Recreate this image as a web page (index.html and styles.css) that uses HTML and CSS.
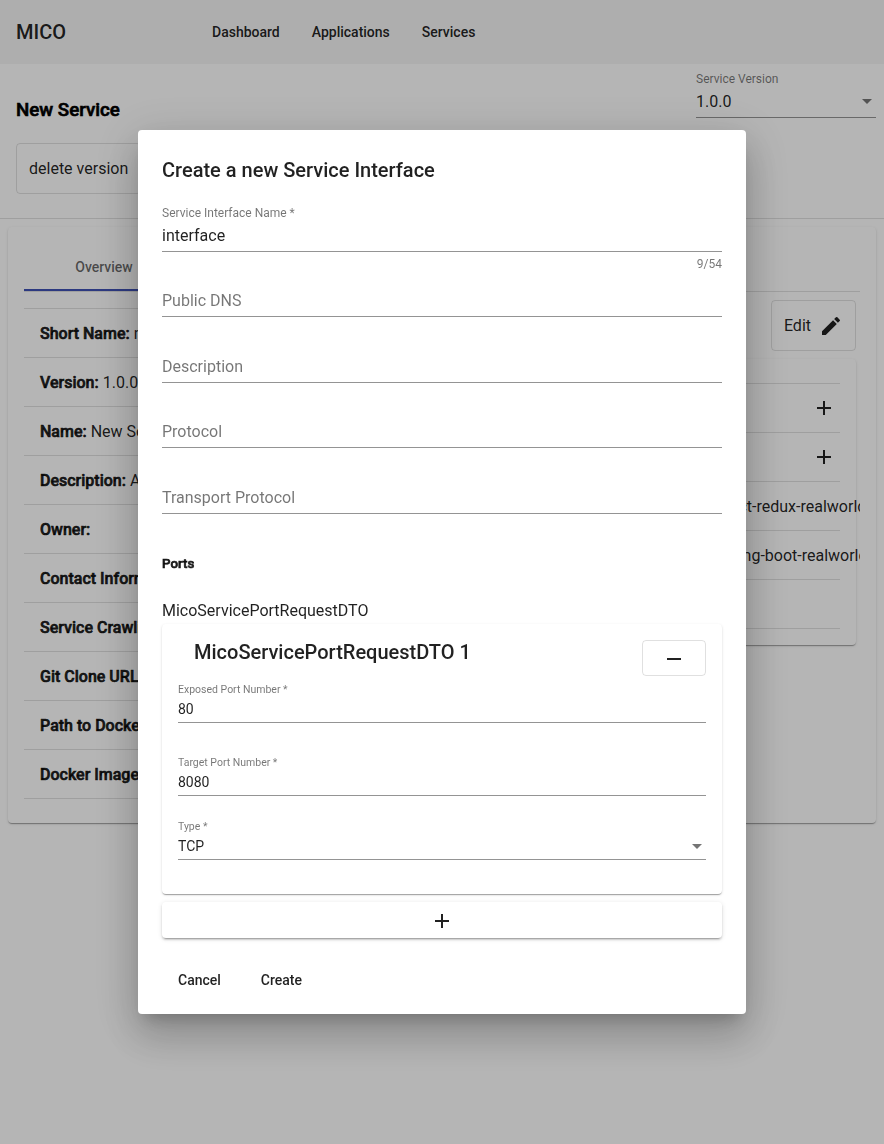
FILE: index.html
```html
<!DOCTYPE html>
<html lang="en">
<head>
<meta charset="utf-8">
<title>MICO</title>
<link rel="stylesheet" href="styles.css">
</head>
<body>
<nav class="toolbar">
  <span class="brand">MICO</span>
  <a>Dashboard</a><a>Applications</a><a>Services</a>
</nav>
<header class="page-head">
  <div class="head-left">
    <h3 class="strong">New Service</h3>
    <button class="outlined">delete version</button>
  </div>
  <div class="field version">
    <span class="label">Service Version</span>
    <span class="value">1.0.0<i class="arrow"></i></span>
  </div>
</header>
<main class="card main-card">
  <div class="tabs"><span class="tab">Overview</span></div>
  <div class="columns">
    <ul class="list info">
      <li><b>Short Name:</b>&nbsp;new-service</li>
      <li><b>Version:</b>&nbsp;1.0.0</li>
      <li><b>Name:</b>&nbsp;New Service</li>
      <li><b>Description:</b>&nbsp;A</li>
      <li><b>Owner:</b></li>
      <li><b>Contact Information:</b></li>
      <li><b>Service Crawling:</b></li>
      <li><b>Git Clone URL:</b></li>
      <li><b>Path to Dockerfile:</b></li>
      <li><b>Docker Image:</b></li>
    </ul>
    <div class="side">
      <button class="outlined edit">Edit
        <svg width="24" height="24" viewBox="0 0 24 24"><path d="M3 17.25V21h3.75L17.81 9.94l-3.75-3.75L3 17.25zM20.71 7.04a.996.996 0 0 0 0-1.41l-2.34-2.34a.996.996 0 0 0-1.41 0l-1.83 1.83 3.75 3.75 1.83-1.83z"/></svg>
      </button>
      <div class="card side-card">
        <ul class="list">
          <li class="add"><svg width="24" height="24" viewBox="0 0 24 24"><path d="M19 13h-6v6h-2v-6H5v-2h6V5h2v6h6v2z"/></svg></li>
          <li class="add"><svg width="24" height="24" viewBox="0 0 24 24"><path d="M19 13h-6v6h-2v-6H5v-2h6V5h2v6h6v2z"/></svg></li>
          <li class="repo">react-redux-realworld-example-app</li>
          <li class="repo">spring-boot-realworld-example-app</li>
          <li></li>
        </ul>
      </div>
    </div>
  </div>
</main>
<div class="backdrop">
  <section class="dialog">
    <h2>Create a new Service Interface</h2>
    <div class="field">
      <span class="label">Service Interface Name *</span>
      <span class="value">interface</span>
      <span class="hint">9/54</span>
    </div>
    <div class="field"><span class="value placeholder">Public DNS</span></div>
    <div class="field"><span class="value placeholder">Description</span></div>
    <div class="field"><span class="value placeholder">Protocol</span></div>
    <div class="field"><span class="value placeholder">Transport Protocol</span></div>
    <h4 class="strong">Ports</h4>
    <div class="group-name">MicoServicePortRequestDTO</div>
    <div class="card port">
      <div class="port-head">
        <h2>MicoServicePortRequestDTO 1</h2>
        <button class="remove"><svg width="24" height="24" viewBox="0 0 24 24"><path d="M19 13H5v-2h14v2z"/></svg></button>
      </div>
      <div class="field small spaced"><span class="label">Exposed Port Number *</span><span class="value">80</span></div>
      <div class="field small"><span class="label">Target Port Number *</span><span class="value">8080</span></div>
      <div class="field small"><span class="label">Type *</span><span class="value">TCP<i class="arrow"></i></span></div>
    </div>
    <button class="add-port"><svg width="24" height="24" viewBox="0 0 24 24"><path d="M19 13h-6v6h-2v-6H5v-2h6V5h2v6h6v2z"/></svg></button>
    <div class="actions"><button>Cancel</button><button>Create</button></div>
  </section>
</div>
</body>
</html>
```
FILE: styles.css
```css
* { box-sizing: border-box; }
html, body { height: 100%; }
body {
  margin: 0;
  overflow: hidden;
  background: #fff;
  color: rgba(0, 0, 0, .87);
  font: 16px/18px Roboto, sans-serif;
}
h2, h3, h4, ul { margin: 0; padding: 0; }
button {
  margin: 0;
  padding: 0;
  border: 0;
  background: none;
  color: inherit;
  font: inherit;
}
svg { display: block; fill: currentColor; }
b, .strong { font-weight: 500; -webkit-text-stroke: .65px currentColor; }

.toolbar {
  display: flex;
  align-items: center;
  gap: 32px;
  height: 64px;
  padding: 0 16px;
  background: #f5f5f5;
  font-size: 14px;
  font-weight: 500;
}
.brand { width: 164px; font-size: 20px; }

.page-head {
  display: flex;
  justify-content: space-between;
  height: 155px;
  padding: 8px 8px 0 16px;
  border-bottom: 1px solid rgba(0, 0, 0, .12);
}
.head-left h3 {
  margin: 27px 0 21px;
  color: #000;
  font-size: 18.72px;
  line-height: 23px;
}
.outlined {
  height: 51px;
  padding: 0 12px;
  border: 1px solid rgba(0, 0, 0, .12);
  border-radius: 4px;
}
.version { width: 180px; }

.field {
  display: flex;
  flex-direction: column;
  height: 65.5px;
  padding-bottom: 20px;
}
.field .label {
  height: 0;
  font-size: 12px;
  line-height: 14px;
  color: rgba(0, 0, 0, .54);
  white-space: nowrap;
}
.field .value {
  display: flex;
  flex: none;
  align-items: center;
  justify-content: space-between;
  height: 45.5px;
  padding: 20.5px 0 6px;
  border-bottom: 1px solid rgba(0, 0, 0, .42);
  line-height: 18px;
}
.field .placeholder { color: rgba(0, 0, 0, .54); }
.hint {
  padding-top: 5px;
  color: rgba(0, 0, 0, .54);
  font-size: 12px;
  line-height: 14px;
  text-align: right;
}
.arrow {
  margin-right: 4px;
  border: 5px solid transparent;
  border-top-color: rgba(0, 0, 0, .54);
  border-bottom: 0;
}

.card {
  border-radius: 4px;
  background: #fff;
  box-shadow: 0 2px 1px -1px rgba(0, 0, 0, .2), 0 1px 1px rgba(0, 0, 0, .14), 0 1px 3px rgba(0, 0, 0, .12);
}
.main-card { margin: 8px 8px 0; padding: 16px 16px 24px; }
.tabs { height: 49px; border-bottom: 1px solid rgba(0, 0, 0, .12); }
.tab {
  display: grid;
  place-items: center;
  width: 160px;
  height: 48px;
  padding-top: 2px;
  border-bottom: 2px solid #3f51b5;
  color: rgba(0, 0, 0, .6);
  font-size: 14px;
  font-weight: 500;
}
.columns {
  display: grid;
  grid-template-columns: 400px minmax(0, 1fr);
  gap: 24px;
  overflow: hidden;
}
.list { border-top: 1px solid rgba(0, 0, 0, .12); list-style: none; }
.list li {
  display: flex;
  align-items: center;
  height: 49px;
  padding-top: 2px;
  border-bottom: 1px solid rgba(0, 0, 0, .12);
  white-space: nowrap;
}
.info { margin-top: 16px; }
.info li { padding-left: 16px; }
.side {
  display: flex;
  flex-direction: column;
  align-items: flex-end;
  gap: 8px;
  padding: 8px 4px 0 0;
}
.edit { display: flex; align-items: center; gap: 8px; }
.side-card { width: 100%; padding: 24px 16px 16px; }
.list .add { justify-content: flex-end; padding: 0 4px 0 0; }
.list .repo { padding-left: 252px; }

.backdrop {
  position: fixed;
  inset: 0;
  display: grid;
  place-items: center;
  background: rgba(0, 0, 0, .29);
}
.dialog {
  width: 608px;
  height: 884px;
  padding: 24px;
  border-radius: 4px;
  background: #fff;
  box-shadow: 0 11px 15px -7px rgba(0, 0, 0, .2), 0 24px 38px 3px rgba(0, 0, 0, .14), 0 9px 46px 8px rgba(0, 0, 0, .12);
}
.dialog h2 { font-size: 20px; font-weight: 500; line-height: 32px; }
.dialog > h2 { margin-bottom: 20px; }
.dialog h4 { margin-top: 21px; font-size: 13.3px; line-height: 18px; }
.group-name { margin-top: 29.5px; }
.port { height: 270px; margin-top: 4px; padding: 16px; }
.port-head {
  display: flex;
  justify-content: space-between;
  height: 43px;
  padding-left: 16px;
}
.port-head h2 { line-height: 24px; }
.remove {
  display: grid;
  place-items: center;
  width: 64px;
  height: 36px;
  padding-top: 2px;
  border: 1px solid rgba(0, 0, 0, .12);
  border-radius: 4px;
}
.field.small { height: 64px; font-size: 14px; }
.small .label { font-size: 10.5px; line-height: 13px; }
.small .value { height: 40px; padding: 19px 0 5px; line-height: 15px; }
.field.spaced { height: 73px; }
.add-port {
  display: grid;
  place-items: center;
  width: 100%;
  height: 36px;
  margin-top: 8px;
  padding-top: 2px;
  border-radius: 4px;
  box-shadow: 0 3px 1px -2px rgba(0, 0, 0, .2), 0 2px 2px rgba(0, 0, 0, .14), 0 1px 5px rgba(0, 0, 0, .12);
}
.actions {
  display: flex;
  gap: 8px;
  margin-top: 24px;
  font-size: 14px;
  font-weight: 500;
  line-height: 36px;
}
.actions button { padding: 0 16px; }
```
